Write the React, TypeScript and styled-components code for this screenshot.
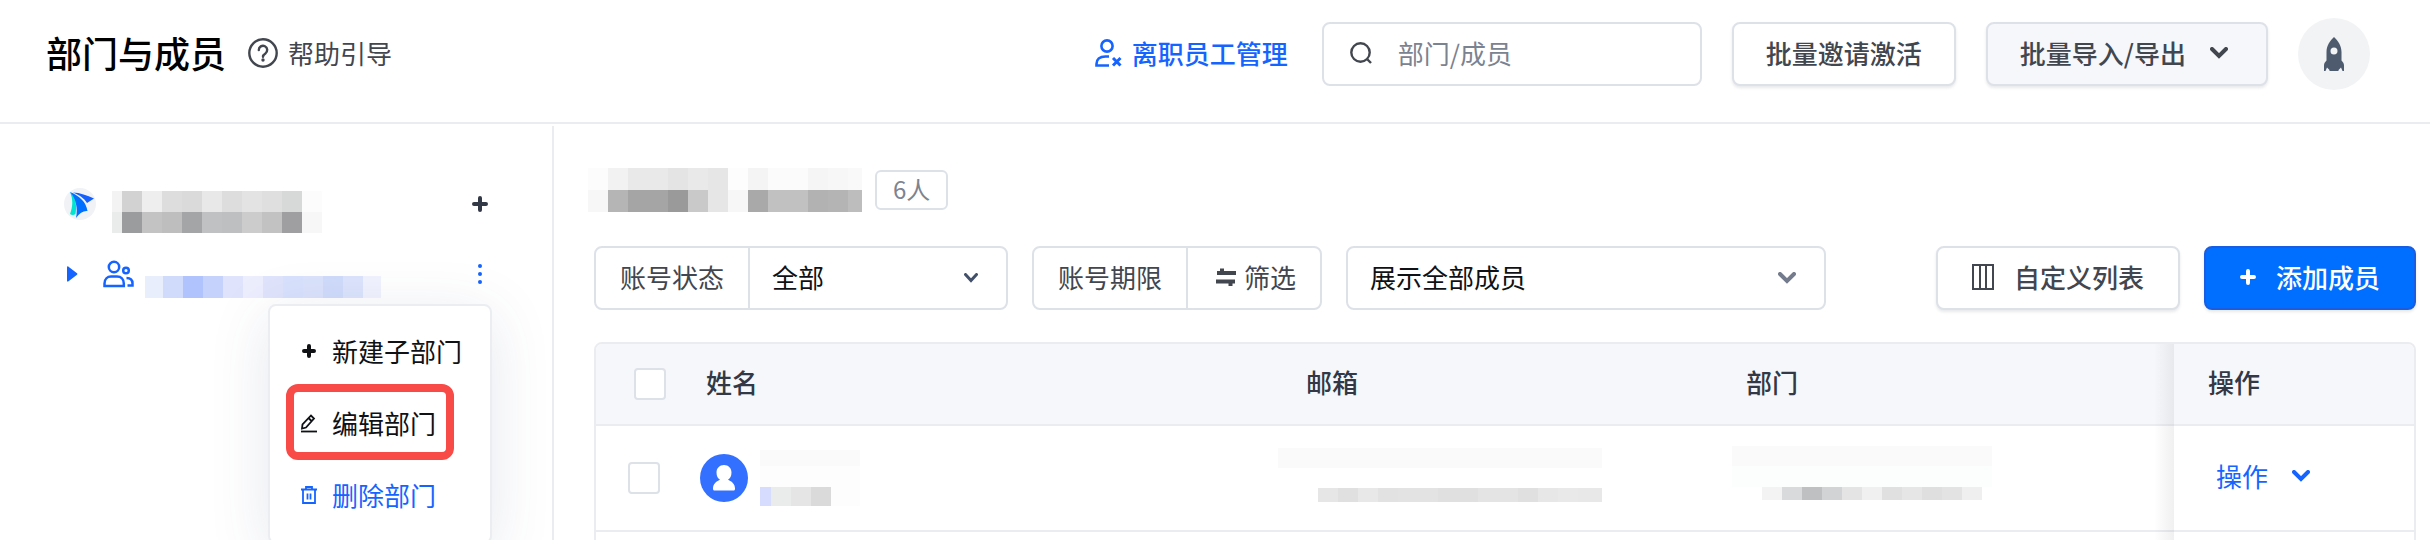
import React from "react";
import styled, { createGlobalStyle, css } from "styled-components";

const GlobalStyle = createGlobalStyle`
  *, *::before, *::after { box-sizing: border-box; }
  body {
    margin: 0;
    background: #fff;
    color: #0f1114;
    font-family: "Noto Sans CJK SC", "Noto Sans", sans-serif;
    font-size: 26px;
    line-height: 40px;
  }
  button, input, select { font: inherit; color: inherit; margin: 0; }
  h1, p, ul { margin: 0; padding: 0; }
`;

const Page = styled.div`
  display: flex;
  flex-direction: column;
  height: 100vh;
  overflow: hidden;
  background: #fff;
`;

const Header = styled.header`
  display: flex;
  align-items: center;
  gap: 30px;
  height: 124px;
  padding: 0 60px 14px 46px;
  border-bottom: 2px solid #ebecf0;
  flex: none;
`;

const Title = styled.h1`
  padding-bottom: 4px;
  font-size: 36px;
  font-weight: 500;
  line-height: 56px;
  color: #000;
`;

const TextLink = styled.a`
  display: flex;
  align-items: center;
  gap: 10px;
  padding-bottom: 2px;
  text-decoration: none;
`;

const HelpLink = styled(TextLink)`
  margin-left: -8px;
  color: #42464e;
`;

const LeaversLink = styled(TextLink)`
  margin-right: 4px;
  font-weight: 500;
  color: #1664ff;
`;

const Spacer = styled.div`
  flex: 1;
`;

const field = css`
  height: 64px;
  border: 2px solid #dde1e8;
  border-radius: 8px;
  background: #fff;
`;

const SearchBox = styled.label`
  ${field}
  display: flex;
  align-items: center;
  gap: 26px;
  width: 380px;
  padding: 0 26px 2px;
`;

const SearchInput = styled.input`
  flex: 1;
  min-width: 0;
  padding: 0;
  border: 0;
  outline: 0;
  background: transparent;
  &::placeholder {
    color: #7b8290;
    opacity: 1;
  }
`;

const Button = styled.button`
  ${field}
  display: flex;
  align-items: center;
  padding: 0 32px 2px;
  color: #42464e;
  font-weight: 500;
  white-space: nowrap;
  box-shadow: 0 2px 3px rgba(30, 40, 60, 0.1);
`;

const FilledButton = styled(Button)`
  gap: 24px;
  padding-right: 38px;
  background: #f6f7fa;
`;

const ToolButton = styled(Button)<{ $primary?: boolean }>`
  gap: 20px;
  padding: 0 34px 2px;
  ${(p) =>
    p.$primary &&
    "background: #006eff; border-color: #1a5de0; color: #fff;"}
`;

const RoundButton = styled.button`
  display: flex;
  align-items: center;
  justify-content: center;
  width: 72px;
  height: 72px;
  padding: 0;
  border: 0;
  border-radius: 50%;
  background: #f2f3f5;
`;

const Body = styled.div`
  display: flex;
  flex: 1;
  min-height: 0;
`;

const Sidebar = styled.aside`
  width: 554px;
  flex: none;
  margin-top: 2px;
  padding: 50px 64px 0;
  border-right: 2px solid #ebecf0;
`;

const TreeRow = styled.div<{ $gap: number }>`
  display: flex;
  align-items: center;
  gap: ${(p) => p.$gap}px;
  height: 56px;
  & + & { margin-top: 14px; }
`;

const IconButton = styled.button`
  display: flex;
  align-items: center;
  justify-content: center;
  width: 20px;
  height: 32px;
  margin-right: -2px;
  padding: 0;
  border: 0;
  background: transparent;
  color: #323845;
`;

const MenuAnchor = styled.div`
  position: relative;
`;

const Menu = styled.ul`
  position: absolute;
  z-index: 2;
  top: 2px;
  right: -4px;
  width: 224px;
  padding: 10px 0;
  list-style: none;
  border: 2px solid #ebedf1;
  border-radius: 8px;
  background: #fff;
  box-shadow: 0 12px 60px rgba(60, 80, 120, 0.13);
`;

const MenuItem = styled.button<{ $blue?: boolean }>`
  display: flex;
  align-items: center;
  gap: 14px;
  width: 100%;
  height: 72px;
  padding: 0 0 2px 30px;
  border: 0;
  background: transparent;
  white-space: nowrap;
  color: ${(p) => (p.$blue ? "#1664ff" : "#0f1114")};
`;

const MenuIcon = styled.span`
  display: flex;
  align-items: center;
  justify-content: center;
  width: 18px;
`;

const MenuEntry = styled.li`
  position: relative;
`;

const Highlight = styled.span`
  position: absolute;
  inset: -4px 36px 0 16px;
  border: 8px solid #f84b47;
  border-radius: 12px;
  pointer-events: none;
`;

const Main = styled.main`
  flex: 1;
  min-width: 0;
  padding: 44px 14px 0 40px;
`;

const Heading = styled.div`
  display: flex;
  align-items: center;
  gap: 13px;
  height: 44px;
  margin-left: -6px;
`;

const CountBadge = styled.span`
  height: 40px;
  padding: 0 16px;
  border: 2px solid #dde1e8;
  border-radius: 6px;
  font-size: 24px;
  line-height: 34px;
  color: #7d838f;
`;

const Toolbar = styled.div`
  display: flex;
  align-items: center;
  gap: 24px;
  margin-top: 34px;
`;

const Group = styled.div`
  ${field}
  display: flex;
  align-items: stretch;
`;

const GroupLabel = styled.label`
  display: flex;
  align-items: center;
  padding: 0 24px 2px;
  border-right: 2px solid #dde1e8;
  color: #42464e;
`;

const GroupButton = styled.button`
  display: flex;
  align-items: center;
  gap: 8px;
  padding: 0 24px 2px 28px;
  border: 0;
  background: transparent;
  color: #42464e;
`;

const SelectWrap = styled.span<{ $width: number; $boxed?: boolean }>`
  position: relative;
  display: block;
  width: ${(p) => p.$width}px;
  ${(p) => p.$boxed && field}
`;

const Select = styled.select`
  appearance: none;
  width: 100%;
  height: 100%;
  padding: 0 60px 2px 22px;
  border: 0;
  outline: 0;
  border-radius: 8px;
  background: transparent;
  color: #0f1114;
`;

const SelectArrow = styled.span`
  position: absolute;
  right: 28px;
  top: 0;
  bottom: 0;
  display: flex;
  align-items: center;
  pointer-events: none;
`;

const TableFrame = styled.div`
  margin-top: 32px;
  border: 2px solid #ebecf0;
  border-radius: 8px;
  overflow: hidden;
`;

const Table = styled.table`
  width: 100%;
  table-layout: fixed;
  border-collapse: separate;
  border-spacing: 0;
`;

const Col = styled.col<{ $w?: string }>`
  width: ${(p) => p.$w ?? "auto"};
`;

const cell = css`
  padding: 0 32px;
  text-align: left;
  vertical-align: middle;
  border-bottom: 2px solid #ebecf0;
`;

const HeadCell = styled.th`
  ${cell}
  height: 82px;
  padding-bottom: 4px;
  background: #f6f7fa;
  color: #323845;
  font-weight: 500;
`;

const BodyCell = styled.td`
  ${cell}
  height: 106px;
`;

const pinned = css`
  position: relative;
  padding-left: 34px;
  &::before {
    content: "";
    position: absolute;
    top: 0;
    bottom: -2px;
    left: -20px;
    width: 20px;
    background: linear-gradient(to right, rgba(40, 45, 60, 0), rgba(40, 45, 60, 0.07));
  }
`;

const PinnedHead = styled(HeadCell)`${pinned}`;
const PinnedCell = styled(BodyCell)`
  ${pinned}
  padding-left: 42px;
`;

const CheckHead = styled(HeadCell)`padding: 0 0 0 38px;`;
const CheckCell = styled(BodyCell)`padding: 0 0 0 32px;`;

const NameCell = styled(BodyCell)`padding-left: 26px;`;
const FlushCell = styled(BodyCell)<{ $pad: number }>`
  padding: 0 0 0 ${(p) => p.$pad}px;
`;

const Checkbox = styled.input`
  appearance: none;
  display: block;
  width: 32px;
  height: 32px;
  border: 2px solid #dde1e8;
  border-radius: 4px;
  background: #fff;
`;

const Person = styled.div`
  display: flex;
  align-items: center;
  gap: 12px;
`;

const ActionButton = styled.button`
  display: flex;
  align-items: center;
  gap: 24px;
  padding: 0 0 4px;
  border: 0;
  background: transparent;
  color: #1664ff;
`;

/* Pixelated placeholder for private names: rows of small coloured tiles. */
const MosaicBox = styled.div<{ $width: number; $bg: string }>`
  width: ${(p) => p.$width}px;
  flex: none;
  background: ${(p) => p.$bg};
`;

const MosaicRow = styled.div<{ $h: number; $inset: number }>`
  display: flex;
  overflow: hidden;
  height: ${(p) => p.$h}px;
  padding-left: ${(p) => p.$inset}px;
`;

const Tile = styled.span<{ $c: string; $w: number }>`
  flex: none;
  width: ${(p) => p.$w}px;
  background: ${(p) => p.$c};
`;

type Strip = { h: number; inset?: number; tiles?: string[] };

function Mosaic({
  width,
  bg = "transparent",
  first = 20,
  strips,
}: {
  width: number;
  bg?: string;
  first?: number;
  strips: Strip[];
}) {
  return (
    <MosaicBox $width={width} $bg={bg} aria-hidden="true">
      {strips.map((s, i) => (
        <MosaicRow key={i} $h={s.h} $inset={s.inset ?? 0}>
          {(s.tiles ?? []).map((c, j) => (
            <Tile key={j} $c={c} $w={j === 0 ? first : 20} />
          ))}
        </MosaicRow>
      ))}
    </MosaicBox>
  );
}

const fill = (n: number, color: string): string[] => Array(n).fill(color);

function Chevron({ w, h, stroke, color }: { w: number; h: number; stroke: number; color: string }) {
  const i = stroke / 2;
  return (
    <svg width={w} height={h} viewBox={`0 0 ${w} ${h}`} fill="none" stroke={color} strokeWidth={stroke} strokeLinecap="round">
      <path d={`M${i} ${i}L${w / 2} ${h - i - 1}L${w - i} ${i}`} />
    </svg>
  );
}

function Plus({ size, stroke }: { size: number; stroke: number }) {
  const m = size / 2;
  const i = stroke / 2;
  return (
    <svg width={size} height={size} viewBox={`0 0 ${size} ${size}`} stroke="currentColor" strokeWidth={stroke} strokeLinecap="round">
      <path d={`M${m} ${i}V${size - i}M${i} ${m}H${size - i}`} />
    </svg>
  );
}

const HelpIcon = () => (
  <svg width="30" height="30" viewBox="0 0 30 30" fill="none" stroke="#42464e" strokeWidth="2.4">
    <circle cx="15" cy="15" r="13.7" />
    <path d="M10.8 12a4.2 4.2 0 1 1 6.6 3.4c-1.600 1-2.400 1.600-2.400 3.300" strokeLinecap="round" />
    <circle cx="15" cy="22" r="1.700" fill="#42464e" stroke="none" />
  </svg>
);

const LeaverIcon = () => (
  <svg width="27" height="28" viewBox="0 0 27 28" fill="none" stroke="currentColor" strokeWidth="2.600">
    <circle cx="12" cy="7" r="5.600" />
    <path d="M14 17.500H10.500C4.500 17.500 1.500 20.500 1.500 25v1.500H14" />
    <path d="M18 19l7.500 7.500M25.500 19L18 26.500" strokeWidth="3" />
  </svg>
);

const SearchIcon = () => (
  <svg width="22" height="22" viewBox="0 0 22 22" fill="none" stroke="#42464e" strokeWidth="2.400">
    <circle cx="10.500" cy="10.500" r="9.200" />
    <path d="M17.500 17.500L21 21" />
  </svg>
);

const RocketIcon = () => (
  <svg width="20" height="34" viewBox="0 0 20 34" fill="#4e5b6f">
    <path fillRule="evenodd" d="M10 0c4 3.500 7.500 9 7.500 15v8.500c1.500 1.500 2.500 3 2.500 5V34h-1.500L17 30.500 14.500 33v1H5.500v-1L3 30.500 1.500 34H0v-5.500c0-2 1-3.500 2.500-5V15C2.500 9 6 3.500 10 0zM10 10.500a3.500 3.500 0 1 0 0 7a3.500 3.500 0 0 0 0-7z" />
  </svg>
);

const BirdLogo = () => (
  <svg width="32" height="32" viewBox="0 0 32 32">
    <circle cx="16" cy="16" r="16" fill="#f1f2f5" />
    <path d="M6 4c3 7 3 14 0 22 2 1.500 4 1 5.500 0C13 18 12 10 6 4z" fill="#00e5cf" />
    <path d="M6 4c10 4 16 10 17.500 19-4-.500-8 2-11.500 7C14 20 12 11 6 4z" fill="#006eff" />
    <path d="M9 4.500c7 0 14 3 21 6l-7 4.500C20 10 15 7 9 4.500z" fill="#1460ff" />
  </svg>
);

const PeopleIcon = () => (
  <svg width="31" height="28" viewBox="0 0 31 28" fill="none" stroke="#1664ff" strokeWidth="2.500">
    <circle cx="11" cy="7" r="5.200" />
    <path d="M1.500 26v-2.500C1.500 19 4.500 16.500 8 16.500h6c4 0 6.800 2.500 6.800 7V26z" />
    <circle cx="23" cy="10.500" r="2.800" />
    <path d="M23.500 18c4 0 6 2 6 5.500V25.500h-5" />
  </svg>
);

const ColumnsIcon = () => (
  <svg width="22" height="26" viewBox="0 0 22 26" fill="none" stroke="#42464e" strokeWidth="2">
    <rect x="1" y="1" width="20" height="24" />
    <path d="M8 1v24M14 1v24" />
  </svg>
);

const SwapIcon = () => (
  <svg width="20" height="20" viewBox="0 0 20 20" fill="none" stroke="#42464e" strokeWidth="4">
    <path d="M1 6H20M6 1.500V8M0 14.500H19M14.500 12.500V19" />
  </svg>
);

const EditIcon = () => (
  <svg width="18" height="20" viewBox="0 0 18 20" fill="none" stroke="currentColor" strokeWidth="1.800">
    <path d="M2 15.500l.500-4L11 2.500l3 3L6 14.500zM8.500 5l3 3" />
    <path d="M1 18.500H17" />
  </svg>
);

const TrashIcon = () => (
  <svg width="18" height="18" viewBox="0 0 18 18" fill="none" stroke="currentColor" strokeWidth="1.800">
    <path d="M1 3.500H17M6 3V1h6v2M3 4v13h12V4M7.500 7.500v6M10.500 7.500v6" />
  </svg>
);

const AvatarIcon = () => (
  <svg width="48" height="48" viewBox="0 0 48 48">
    <circle cx="24" cy="24" r="24" fill="#3370ff" />
    <path d="M24 11c4.500 0 7.500 3.300 7.500 7.500 0 3.500-1.300 6-3.500 7.300 4 1.500 7 4.700 7 8.700 0 1.500-.500 2-1.500 2h-19c-1 0-1.500-.500-1.500-2 0-4 3-7.200 7-8.700-2.200-1.300-3.500-3.800-3.500-7.300C16.500 14.300 19.500 11 24 11z" fill="#fff" />
  </svg>
);

const MemberRow = () => (
  <tr>
    <CheckCell>
      <Checkbox type="checkbox" aria-label="选择成员" />
    </CheckCell>
    <NameCell>
      <Person>
        <AvatarIcon />
        <Mosaic
          width={100}
          bg="#fdfdfd"
          first={11}
          strips={[
            { h: 16, tiles: fill(6, "#fafafa") },
            { h: 21 },
            { h: 19, tiles: ["#d6dcfd", "#eaebeb", "#e5e5e5", "#dadada"] },
          ]}
        />
      </Person>
    </NameCell>
    <FlushCell $pad={4}>
      <Mosaic
        width={324}
        strips={[
          { h: 20, tiles: fill(17, "#fafafa") },
          { h: 20 },
          {
            h: 14,
            inset: 40,
            tiles: ["#e6e6e6", "#e0e0e0", "#e8e8e8", "#e2e2e2", "#e3e3e3", "#e3e3e3", "#e0e0e0", "#e0e0e0", "#e4e4e4", "#e4e4e4", "#e0e0e0", "#e7e7e7", "#e9e9e9", "#e8e8e8", "#e8e8e8"],
          },
          { h: 6 },
        ]}
      />
    </FlushCell>
    <FlushCell $pad={18}>
      <Mosaic
        width={260}
        strips={[
          { h: 20, tiles: fill(13, "#fafafa") },
          { h: 21, tiles: fill(13, "#fcfdfd") },
          {
            h: 13,
            inset: 30,
            tiles: ["#f3f3f3", "#d9dadc", "#bfc0c2", "#d2d3d5", "#e4e4e4", "#f0f0f0", "#e0e0e0", "#e6e6e6", "#dfdfdf", "#e3e3e3", "#efefef"],
          },
          { h: 10 },
        ]}
      />
    </FlushCell>
    <PinnedCell>
      <ActionButton type="button">
        操作
        <Chevron w={18} h={12} stroke={4} color="#1664ff" />
      </ActionButton>
    </PinnedCell>
  </tr>
);

const EmptyRow = () => (
  <tr>
    <BodyCell colSpan={4} />
    <PinnedCell />
  </tr>
);

export default function App() {
  return (
    <Page>
      <GlobalStyle />
      <Header>
        <Title>部门与成员</Title>
        <HelpLink href="#help">
          <HelpIcon />
          帮助引导
        </HelpLink>
        <Spacer />
        <LeaversLink href="#leavers">
          <LeaverIcon />
          离职员工管理
        </LeaversLink>
        <SearchBox>
          <SearchIcon />
          <SearchInput type="text" placeholder="部门/成员" aria-label="部门/成员" />
        </SearchBox>
        <Button type="button">批量邀请激活</Button>
        <FilledButton type="button">
          批量导入/导出
          <Chevron w={18} h={12} stroke={4} color="#42464e" />
        </FilledButton>
        <RoundButton type="button" aria-label="快速入门">
          <RocketIcon />
        </RoundButton>
      </Header>

      <Body>
        <Sidebar>
          <TreeRow $gap={16}>
            <BirdLogo />
            <Mosaic
              width={218}
              first={10}
              strips={[
                { h: 16 },
                { h: 21, tiles: ["#f3f3f3", "#d2d2d2", "#eeeeee", "#dddddd", "#dadada", "#e8e8e8", "#dddddd", "#e3e3e3", "#dfdfdf", "#d6d9d8", "#fcfcfc"] },
                { h: 21, tiles: ["#eaebeb", "#9b9c9e", "#c3c3c3", "#bebebe", "#a4a5a7", "#bfc1c3", "#bdbfc1", "#cccccc", "#c2c2c2", "#9f9fa1", "#f7f7f7"] },
              ]}
            />
            <Spacer />
            <IconButton type="button" aria-label="新建部门">
              <Plus size={16} stroke={4} />
            </IconButton>
          </TreeRow>
          <TreeRow $gap={11}>
            <svg width="28" height="16" viewBox="0 0 28 16" fill="#1664ff">
              <path d="M3 1.500c0-1 .600-1.500 1.500-.800l8.500 6.600c.500.400.500 1 0 1.400l-8.500 6.600c-.900.700-1.500.200-1.500-.800z" />
            </svg>
            <PeopleIcon />
            <Mosaic
              width={236}
              first={18}
              strips={[
                { h: 26 },
                { h: 22, tiles: ["#e8eefc", "#d0dbfc", "#b0c3fd", "#c5d2fc", "#dfe4fc", "#ecedfd", "#dfe3fb", "#d8e1fc", "#dae2fb", "#d0dbfb", "#dce4fc", "#f1f2fe"] },
              ]}
            />
            <Spacer />
            <IconButton type="button" aria-label="更多">
              <svg width="4" height="22" viewBox="0 0 4 22" fill="#1664ff">
                <circle cx="2" cy="3" r="2" />
                <circle cx="2" cy="11" r="2" />
                <circle cx="2" cy="19" r="2" />
              </svg>
            </IconButton>
          </TreeRow>
          <MenuAnchor>
            <Menu>
              <MenuEntry>
                <MenuItem type="button">
                  <MenuIcon>
                    <Plus size={14} stroke={4} />
                  </MenuIcon>
                  新建子部门
                </MenuItem>
              </MenuEntry>
              <MenuEntry>
                <MenuItem type="button">
                  <MenuIcon>
                    <EditIcon />
                  </MenuIcon>
                  编辑部门
                </MenuItem>
                <Highlight />
              </MenuEntry>
              <MenuEntry>
                <MenuItem type="button" $blue>
                  <MenuIcon>
                    <TrashIcon />
                  </MenuIcon>
                  删除部门
                </MenuItem>
              </MenuEntry>
            </Menu>
          </MenuAnchor>
        </Sidebar>

        <Main>
          <Heading>
            <Mosaic
              width={274}
              strips={[
                { h: 22, tiles: ["#fcfcfc", "#f2f2f2", "#e9e9e9", "#e9e9e9", "#e4e4e4", "#e9e9e9", "#e6e6e6", "#fdfdfd", "#f4f4f4", "#fbfbfb", "#fbfbfb", "#f5f5f5", "#f7f7f7", "#f9f9f9"] },
                { h: 22, tiles: ["#f7f7f7", "#b5b5b5", "#a5a5a5", "#a5a5a5", "#9a9a9a", "#c9c9c9", "#e6e6e6", "#f7f7f7", "#a9a9a9", "#c1c1c1", "#c1c1c1", "#b2b2b2", "#b4b4b4", "#bdbdbd"] },
              ]}
            />
            <CountBadge>6人</CountBadge>
          </Heading>

          <Toolbar>
            <Group>
              <GroupLabel htmlFor="status">账号状态</GroupLabel>
              <SelectWrap $width={256}>
                <Select id="status">
                  <option>全部</option>
                </Select>
                <SelectArrow>
                  <Chevron w={14} h={10} stroke={3} color="#42506a" />
                </SelectArrow>
              </SelectWrap>
            </Group>
            <Group>
              <GroupLabel htmlFor="period">账号期限</GroupLabel>
              <GroupButton id="period" type="button">
                <SwapIcon />
                筛选
              </GroupButton>
            </Group>
            <SelectWrap $width={480} $boxed>
              <Select aria-label="展示范围">
                <option>展示全部成员</option>
              </Select>
              <SelectArrow>
                <Chevron w={18} h={12} stroke={4} color="#737b8c" />
              </SelectArrow>
            </SelectWrap>
            <Spacer />
            <ToolButton type="button">
              <ColumnsIcon />
              自定义列表
            </ToolButton>
            <ToolButton type="button" $primary>
              <Plus size={16} stroke={4} />
              添加成员
            </ToolButton>
          </Toolbar>

          <TableFrame>
            <Table>
              <colgroup>
                <Col $w="78px" />
                <Col $w="33%" />
                <Col $w="440px" />
                <Col />
                <Col $w="240px" />
              </colgroup>
              <thead>
                <tr>
                  <CheckHead scope="col">
                    <Checkbox type="checkbox" aria-label="全选" />
                  </CheckHead>
                  <HeadCell scope="col">姓名</HeadCell>
                  <HeadCell scope="col">邮箱</HeadCell>
                  <HeadCell scope="col">部门</HeadCell>
                  <PinnedHead scope="col">操作</PinnedHead>
                </tr>
              </thead>
              <tbody>
                <MemberRow />
                <EmptyRow />
              </tbody>
            </Table>
          </TableFrame>
        </Main>
      </Body>
    </Page>
  );
}
